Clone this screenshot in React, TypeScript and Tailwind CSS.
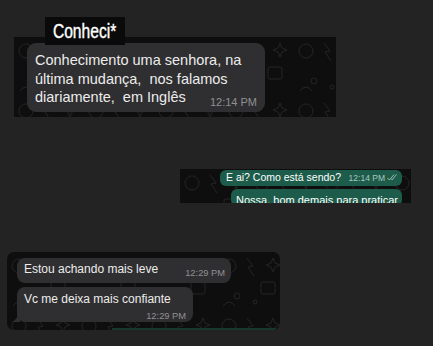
import React from "react";

// faint whatsapp-style doodles behind the chat
const Doodles = ({ id }: { id: string }) => (
  <svg className="absolute inset-0 h-full w-full" aria-hidden="true">
    <defs>
      <pattern id={id} width="70" height="60" patternUnits="userSpaceOnUse">
        <g fill="none" stroke="#232323" strokeWidth="1">
          <circle cx="12" cy="14" r="7" />
          <path d="M30 6 l6 8 -5 1 6 9" />
          <rect x="44" y="30" width="14" height="12" rx="2" />
          <circle cx="20" cy="44" r="3" />
          <path d="M56 6 l2 5 5 2 -5 2 -2 5 -2 -5 -5 -2 5 -2z" />
          <path d="M6 54 q6 -8 12 0" />
          <circle cx="38" cy="50" r="2" />
        </g>
      </pattern>
    </defs>
    <rect width="100%" height="100%" fill={`url(#${id})`} />
  </svg>
);

const Time = ({ children, className = "" }: { children: React.ReactNode; className?: string }) => (
  <span className={`whitespace-nowrap text-[#8f8f92] ${className}`}>{children}</span>
);

const App = () => {
  return (
    <div
      className="h-[346px] w-full overflow-hidden bg-[#232323] flex flex-col"
      style={{ fontFamily: '"Liberation Sans", Arial, sans-serif' }}
    >
      {/* first chat crop */}
      <div className="relative ml-[14px] mt-[37px] w-[322px] h-[80px] bg-[#0e0e0e] pl-[13px] pt-[6px]">
        <Doodles id="d1" />
        <div className="relative w-[238px] h-[69px] rounded-[9px] bg-[#2f2f31] pl-[8px] pt-[8px] text-[14.5px] leading-[18.5px] text-[#ececec]">
          <p>Conhecimento uma senhora, na</p>
          <p>última mudança,&nbsp; nos falamos</p>
          <div className="flex items-end justify-between pr-[8px]">
            <p>diariamente,&nbsp; em Inglês</p>
            <Time className="text-[11px] leading-[14px] mb-[-2px]">12:14 PM</Time>
          </div>
        </div>
        <div className="absolute left-[31px] top-[-20px] w-[80px] h-[28px] bg-[#0a0a0a] flex items-center justify-center text-white text-[20px] leading-none">
          <span className="inline-block scale-x-[0.78] [-webkit-text-stroke:0.4px_white]">Conheci*</span>
        </div>
      </div>

      {/* second chat crop */}
      <div className="relative ml-[180px] mt-[52px] w-[231px] h-[34px] overflow-hidden bg-[#0e0e0e] flex flex-col items-end pr-[9px] pt-[1px]">
        <Doodles id="d2" />
        <div className="relative w-[182px] h-[19px] rounded-[6px] bg-[#1d5c4a] flex items-center justify-between pl-[6px] pr-[4px] text-[10.5px] text-white">
          <span>E ai? Como está sendo?</span>
          <span className="flex items-center gap-[2px] text-[8.5px] text-[#a9c7bd]">
            12:14 PM
            <svg width="11" height="7" viewBox="0 0 11 7" fill="none" stroke="#a9c7bd" strokeWidth="0.9">
              <path d="M0.5 4 l2 2 4.5 -5.5" />
              <path d="M4.5 5.5 l0.5 0.5 4.5 -5.5" />
            </svg>
          </span>
        </div>
        <div className="relative mt-[3px] w-[171px] h-[19px] rounded-[6px] bg-[#1d5c4a] pl-[5px] pt-[5px] text-[11px] leading-[12px] text-white whitespace-nowrap">
          Nossa, bom demais para praticar
        </div>
      </div>

      {/* third chat crop */}
      <div className="relative ml-[7px] mt-[49px] w-[273px] h-[78px] rounded-[7px] overflow-hidden bg-[#0e0e0e] pl-[10px] pt-[6px]">
        <Doodles id="d3" />
        <div className="relative w-[214px] h-[25px] rounded-[8px] bg-[#2f2f31] flex items-end justify-between pl-[7px] pr-[6px] pb-[2px] text-[12px] text-[#ececec]">
          <span className="mb-[3px]">Estou achando mais leve</span>
          <Time className="text-[9.3px]">12:29 PM</Time>
        </div>
        <div className="relative mt-[4px] w-[176px] h-[35px] rounded-[8px] bg-[#2f2f31] flex flex-col pl-[7px] pr-[7px] pt-[3px] text-[12px] text-[#ececec]">
          <span>Vc me deixa mais confiante</span>
          <Time className="self-end text-[9.3px] mt-[2px]">12:29 PM</Time>
          <svg className="absolute left-[-5px] bottom-0" width="8" height="8" viewBox="0 0 8 8">
            <path d="M8 0 L8 8 L0 8 Q5 6 6 0 Z" fill="#2f2f31" />
          </svg>
        </div>
        <div className="absolute left-[105px] right-[4px] bottom-0 h-[2px] bg-[#16382e]" />
      </div>
    </div>
  );
};

export default App;
